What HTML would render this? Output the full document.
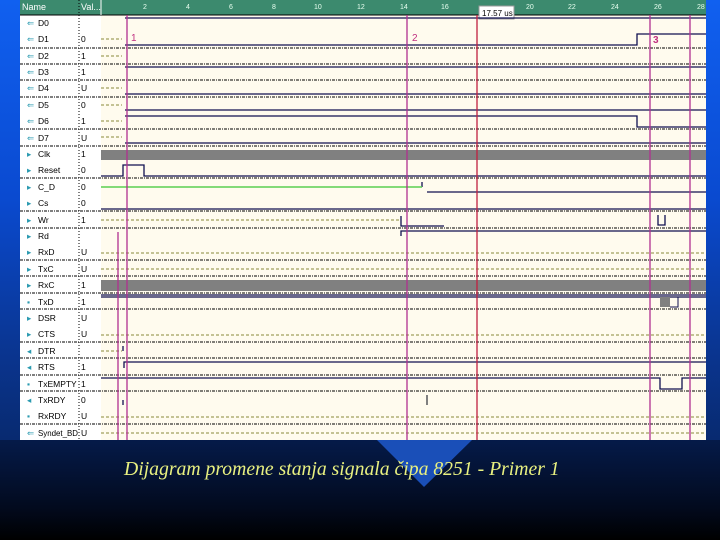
<!DOCTYPE html>
<html><head><meta charset="utf-8"><style>
html,body{margin:0;padding:0;width:720px;height:540px;overflow:hidden}
body{background:linear-gradient(180deg,#0a4ed8 0%,#0a40b8 30%,#0a2f80 62%,#061f55 78%,#020a1e 94%,#000 100%);position:relative}
.lft{position:absolute;left:0;top:0;width:20px;height:440px;background:linear-gradient(180deg,#1060f0 0%,#0a4ad0 45%,#0a3590 80%,#082a70 100%)}
.rgt{position:absolute;right:0;top:0;width:14px;height:440px;background:linear-gradient(180deg,#1060f0 0%,#0a4ad0 45%,#0a3590 80%,#082a70 100%)}
svg{position:absolute;left:0;top:0}
.cap{position:absolute;left:124px;top:458px;font-family:"Liberation Serif",serif;font-style:italic;font-size:19.7px;color:#e8f080;white-space:nowrap}
</style></head><body>
<div class="lft"></div><div class="rgt"></div>
<svg width="720" height="540" viewBox="0 0 720 540">
<polygon points="377,440 472,440 424,487" fill="#1a4fb8"/>
<rect x="20" y="0" width="686" height="440" fill="#fffbee"/>
<rect x="20" y="15" width="81" height="425" fill="#fff"/>
<rect x="20" y="0" width="686" height="15" fill="#3c8a6e"/>
<line x1="20" y1="15" x2="706" y2="15" stroke="#000" stroke-width="1"/>
<line x1="79" y1="0" x2="79" y2="440" stroke="#000" stroke-dasharray="1,2"/>
<line x1="101" y1="0" x2="101" y2="15" stroke="#fff"/>
<g font-family="Liberation Sans,sans-serif" font-size="9" fill="#000">
<text x="22" y="10" fill="#fff">Name</text><text x="81" y="10" fill="#fff">Val...</text>
<g fill="#e8fff0" font-size="7">
<text x="143" y="9">2</text><text x="186" y="9">4</text><text x="229" y="9">6</text><text x="272" y="9">8</text><text x="314" y="9">10</text><text x="357" y="9">12</text><text x="400" y="9">14</text><text x="441" y="9">16</text><text x="526" y="9">20</text><text x="568" y="9">22</text><text x="611" y="9">24</text><text x="654" y="9">26</text><text x="697" y="9">28</text>
</g>
<rect x="479" y="6" width="35" height="13" fill="#fff" stroke="#999"/>
<text x="482" y="16" font-size="8">17.57 us</text>
</g>
<g stroke="#000" stroke-width="1" stroke-dasharray="3,1,1,1">
<line x1="20" y1="48" x2="706" y2="48"/><line x1="20" y1="64" x2="706" y2="64"/><line x1="20" y1="80" x2="706" y2="80"/><line x1="20" y1="97" x2="706" y2="97"/><line x1="20" y1="129" x2="706" y2="129"/><line x1="20" y1="146" x2="706" y2="146"/><line x1="20" y1="178" x2="706" y2="178"/><line x1="20" y1="211" x2="706" y2="211"/><line x1="20" y1="228" x2="706" y2="228"/><line x1="20" y1="260" x2="706" y2="260"/><line x1="20" y1="276" x2="706" y2="276"/><line x1="20" y1="293" x2="706" y2="293"/><line x1="20" y1="309" x2="706" y2="309"/><line x1="20" y1="342" x2="706" y2="342"/><line x1="20" y1="358" x2="706" y2="358"/><line x1="20" y1="375" x2="706" y2="375"/><line x1="20" y1="391" x2="706" y2="391"/><line x1="20" y1="424" x2="706" y2="424"/>
</g>
<g stroke="#8a8a3a" stroke-width="1" stroke-dasharray="3,2">
<line x1="101" y1="39" x2="122" y2="39"/><line x1="101" y1="56" x2="122" y2="56"/><line x1="101" y1="88" x2="122" y2="88"/><line x1="101" y1="105" x2="122" y2="105"/><line x1="101" y1="121" x2="122" y2="121"/><line x1="101" y1="137" x2="122" y2="137"/>
<line x1="101" y1="220" x2="400" y2="220"/><line x1="101" y1="253" x2="706" y2="253"/><line x1="101" y1="269" x2="706" y2="269"/><line x1="101" y1="335" x2="706" y2="335"/><line x1="101" y1="351" x2="122" y2="351"/><line x1="101" y1="417" x2="706" y2="417"/><line x1="101" y1="433" x2="706" y2="433"/>
</g>
<g stroke="#101050" stroke-width="1.3" fill="none">
<line x1="125" y1="18" x2="706" y2="18"/>
<polyline points="125,45 637,45 637,34 706,34"/>
<line x1="125" y1="67" x2="706" y2="67"/>
<line x1="125" y1="94" x2="706" y2="94"/>
<line x1="125" y1="110" x2="706" y2="110"/>
<polyline points="125,116 637,116 637,127 706,127"/>
<line x1="125" y1="143" x2="706" y2="143"/>
<polyline points="101,176 123,176 123,165 144,165 144,176 706,176"/>
<line x1="427" y1="192" x2="706" y2="192"/>
<line x1="422" y1="182" x2="422" y2="187"/>
<line x1="101" y1="209" x2="706" y2="209"/>
<polyline points="401,216 401,226 444,226"/>
<polyline points="401,236 401,231 706,231"/>
<polyline points="658,215 658,225 665,225 665,215"/>
<line x1="101" y1="295" x2="706" y2="295"/><line x1="101" y1="297" x2="706" y2="297"/>
<polyline points="124,368 124,362 706,362"/>
<line x1="123" y1="346" x2="123" y2="351"/>
<polyline points="101,378 660,378 660,389 682,389 682,378 706,378"/>
<line x1="123" y1="400" x2="123" y2="405"/>
</g>
<line x1="101" y1="187" x2="422" y2="187" stroke="#5ad050" stroke-width="1.5"/>
<rect x="101" y="150" width="605" height="10" fill="#808080"/>
<rect x="101" y="280" width="605" height="11" fill="#808080"/>
<rect x="660" y="297" width="10" height="10" fill="#808080"/>
<polyline points="670,307 678,307 678,297" stroke="#101050" fill="none"/>
<line x1="427" y1="395" x2="427" y2="405" stroke="#808080" stroke-width="2"/>
<g stroke="#b03090" stroke-width="1.3">
<line x1="127" y1="15" x2="127" y2="440"/><line x1="118" y1="232" x2="118" y2="440"/>
<line x1="407" y1="15" x2="407" y2="440"/><line x1="650" y1="15" x2="650" y2="440"/><line x1="690" y1="15" x2="690" y2="440"/>
</g>
<line x1="477" y1="15" x2="477" y2="440" stroke="#c02040" stroke-width="1.3"/>
<g font-family="Liberation Sans,sans-serif" font-size="10" fill="#c03080">
<text x="131" y="41">1</text><text x="412" y="41">2</text><text x="653" y="43" font-weight="bold">3</text>
</g>
<g font-family="Liberation Sans,sans-serif" font-size="8.5" fill="#000">
<g fill="#2a9ab0">
<text x="27" y="26">⇐</text><text x="27" y="42">⇐</text><text x="27" y="59">⇐</text><text x="27" y="75">⇐</text><text x="27" y="91">⇐</text><text x="27" y="108">⇐</text><text x="27" y="124">⇐</text><text x="27" y="141">⇐</text>
<text x="27" y="157">▸</text><text x="27" y="173">▸</text><text x="27" y="190">▸</text><text x="27" y="206">▸</text><text x="27" y="223">▸</text><text x="27" y="239">▸</text><text x="27" y="255">▸</text><text x="27" y="272">▸</text><text x="27" y="288">▸</text><text x="27" y="305">▪</text><text x="27" y="321">▸</text><text x="27" y="337">▸</text><text x="27" y="354">◂</text><text x="27" y="370">◂</text><text x="27" y="387">▪</text><text x="27" y="403">◂</text><text x="27" y="419">▪</text><text x="27" y="436">⇐</text>
</g>
<text x="38" y="26">D0</text><text x="38" y="42">D1</text><text x="38" y="59">D2</text><text x="38" y="75">D3</text><text x="38" y="91">D4</text><text x="38" y="108">D5</text><text x="38" y="124">D6</text><text x="38" y="141">D7</text><text x="38" y="157">Clk</text><text x="38" y="173">Reset</text><text x="38" y="190">C_D</text><text x="38" y="206">Cs</text><text x="38" y="223">Wr</text><text x="38" y="239">Rd</text><text x="38" y="255">RxD</text><text x="38" y="272">TxC</text><text x="38" y="288">RxC</text><text x="38" y="305">TxD</text><text x="38" y="321">DSR</text><text x="38" y="337">CTS</text><text x="38" y="354">DTR</text><text x="38" y="370">RTS</text><text x="38" y="387">TxEMPTY</text><text x="38" y="403">TxRDY</text><text x="38" y="419">RxRDY</text><text x="38" y="436" textLength="40" lengthAdjust="spacingAndGlyphs">Syndet_BD</text>
<text x="81" y="42">0</text><text x="81" y="59">1</text><text x="81" y="75">1</text><text x="81" y="91">U</text><text x="81" y="108">0</text><text x="81" y="124">1</text><text x="81" y="141">U</text><text x="81" y="157">1</text><text x="81" y="173">0</text><text x="81" y="190">0</text><text x="81" y="206">0</text><text x="81" y="223">1</text><text x="81" y="255">U</text><text x="81" y="272">U</text><text x="81" y="288">1</text><text x="81" y="305">1</text><text x="81" y="321">U</text><text x="81" y="337">U</text><text x="81" y="370">1</text><text x="81" y="387">1</text><text x="81" y="403">0</text><text x="81" y="419">U</text><text x="81" y="436">U</text>
</g>
</svg>
<div class="cap">Dijagram promene stanja signala čipa 8251 - Primer 1</div>
</body></html>
